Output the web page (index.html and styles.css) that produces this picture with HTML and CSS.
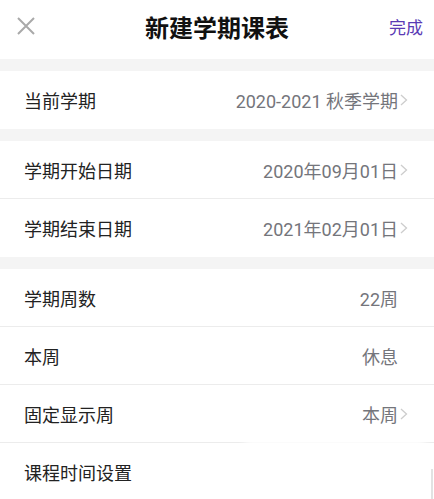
FILE: index.html
```html
<!DOCTYPE html>
<html lang="zh-CN">
<head>
  <meta charset="UTF-8" />
  <meta name="viewport" content="width=device-width, initial-scale=1.0"/>
  <title>新建学期课表</title>
  <link rel="stylesheet" href="styles.css">
</head>
<body>

  <header class="topbar">
    <span class="close">
      <svg width="20" height="20" viewBox="0 0 20 20">
        <path d="M2 2 L18 18 M18 2 L2 18" stroke="#a9a9a9" stroke-width="2" fill="none"/>
      </svg>
    </span>
    <h1>新建学期课表</h1>
    <a class="done" href="#">完成</a>
  </header>

  <section class="group">
    <div class="row">
      <span class="label">当前学期</span>
      <span class="value">2020-2021 秋季学期</span>
      <span class="arrow"><svg width="8" height="12" viewBox="0 0 8 12"><path d="M1 1 L6.5 6 L1 11" stroke="#cdcdcd" stroke-width="1.3" fill="none"/></svg></span>
    </div>
  </section>

  <section class="group">
    <div class="row">
      <span class="label">学期开始日期</span>
      <span class="value">2020年09月01日</span>
      <span class="arrow"><svg width="8" height="12" viewBox="0 0 8 12"><path d="M1 1 L6.5 6 L1 11" stroke="#cdcdcd" stroke-width="1.3" fill="none"/></svg></span>
    </div>
    <div class="row">
      <span class="label">学期结束日期</span>
      <span class="value">2021年02月01日</span>
      <span class="arrow"><svg width="8" height="12" viewBox="0 0 8 12"><path d="M1 1 L6.5 6 L1 11" stroke="#cdcdcd" stroke-width="1.3" fill="none"/></svg></span>
    </div>
  </section>

  <section class="group">
    <div class="row">
      <span class="label">学期周数</span>
      <span class="value">22周</span>
      <span class="arrow"></span>
    </div>
    <div class="row">
      <span class="label">本周</span>
      <span class="value">休息</span>
      <span class="arrow"></span>
    </div>
    <div class="row">
      <span class="label">固定显示周</span>
      <span class="value">本周</span>
      <span class="arrow"><svg width="8" height="12" viewBox="0 0 8 12"><path d="M1 1 L6.5 6 L1 11" stroke="#cdcdcd" stroke-width="1.3" fill="none"/></svg></span>
    </div>
    <div class="row">
      <span class="label">课程时间设置</span>
      <span class="value"></span>
      <span class="arrow"></span>
    </div>
    <div class="smudge"></div>
    <div class="scrollbar"></div>
  </section>

</body>
</html>
```

FILE: styles.css
```css
* {
  box-sizing: border-box;
  margin: 0;
  padding: 0;
}

body {
  font-family: Roboto, "Noto Sans CJK SC", sans-serif;
  background: #f4f4f4;
  color: #222;
  overflow: hidden;
}

.topbar {
  height: 59px;
  background: #fff;
  display: flex;
  align-items: center;
  justify-content: space-between;
  padding: 0 11px 7px 16px;
  position: relative;
}

.close {
  display: flex;
  width: 20px;
  height: 20px;
}

.topbar h1 {
  position: absolute;
  left: 0;
  right: 0;
  top: 9px;
  text-align: center;
  font-size: 24px;
  font-weight: bold;
  color: #111;
  pointer-events: none;
}

.done {
  font-size: 17px;
  color: #5a3ab4;
  text-decoration: none;
}

.group {
  background: #fff;
  margin-top: 12px;
  position: relative;
}

.row {
  height: 58px;
  display: flex;
  align-items: center;
  padding: 0 26px 0 24px;
  border-bottom: 1px solid #ececec;
}

.row:last-of-type {
  border-bottom: none;
}

.label {
  font-size: 18px;
  flex: 1;
}

.value {
  font-size: 18px;
  color: #74757b;
}

.arrow {
  width: 10px;
  display: flex;
  justify-content: flex-end;
}

.smudge {
  position: absolute;
  left: 245px;
  top: 170px;
  width: 180px;
  height: 40px;
  background: #fff;
  filter: blur(4px);
}

.scrollbar {
  position: absolute;
  right: 1px;
  top: 200px;
  width: 2px;
  height: 40px;
  background: #e2e2e2;
}
```
